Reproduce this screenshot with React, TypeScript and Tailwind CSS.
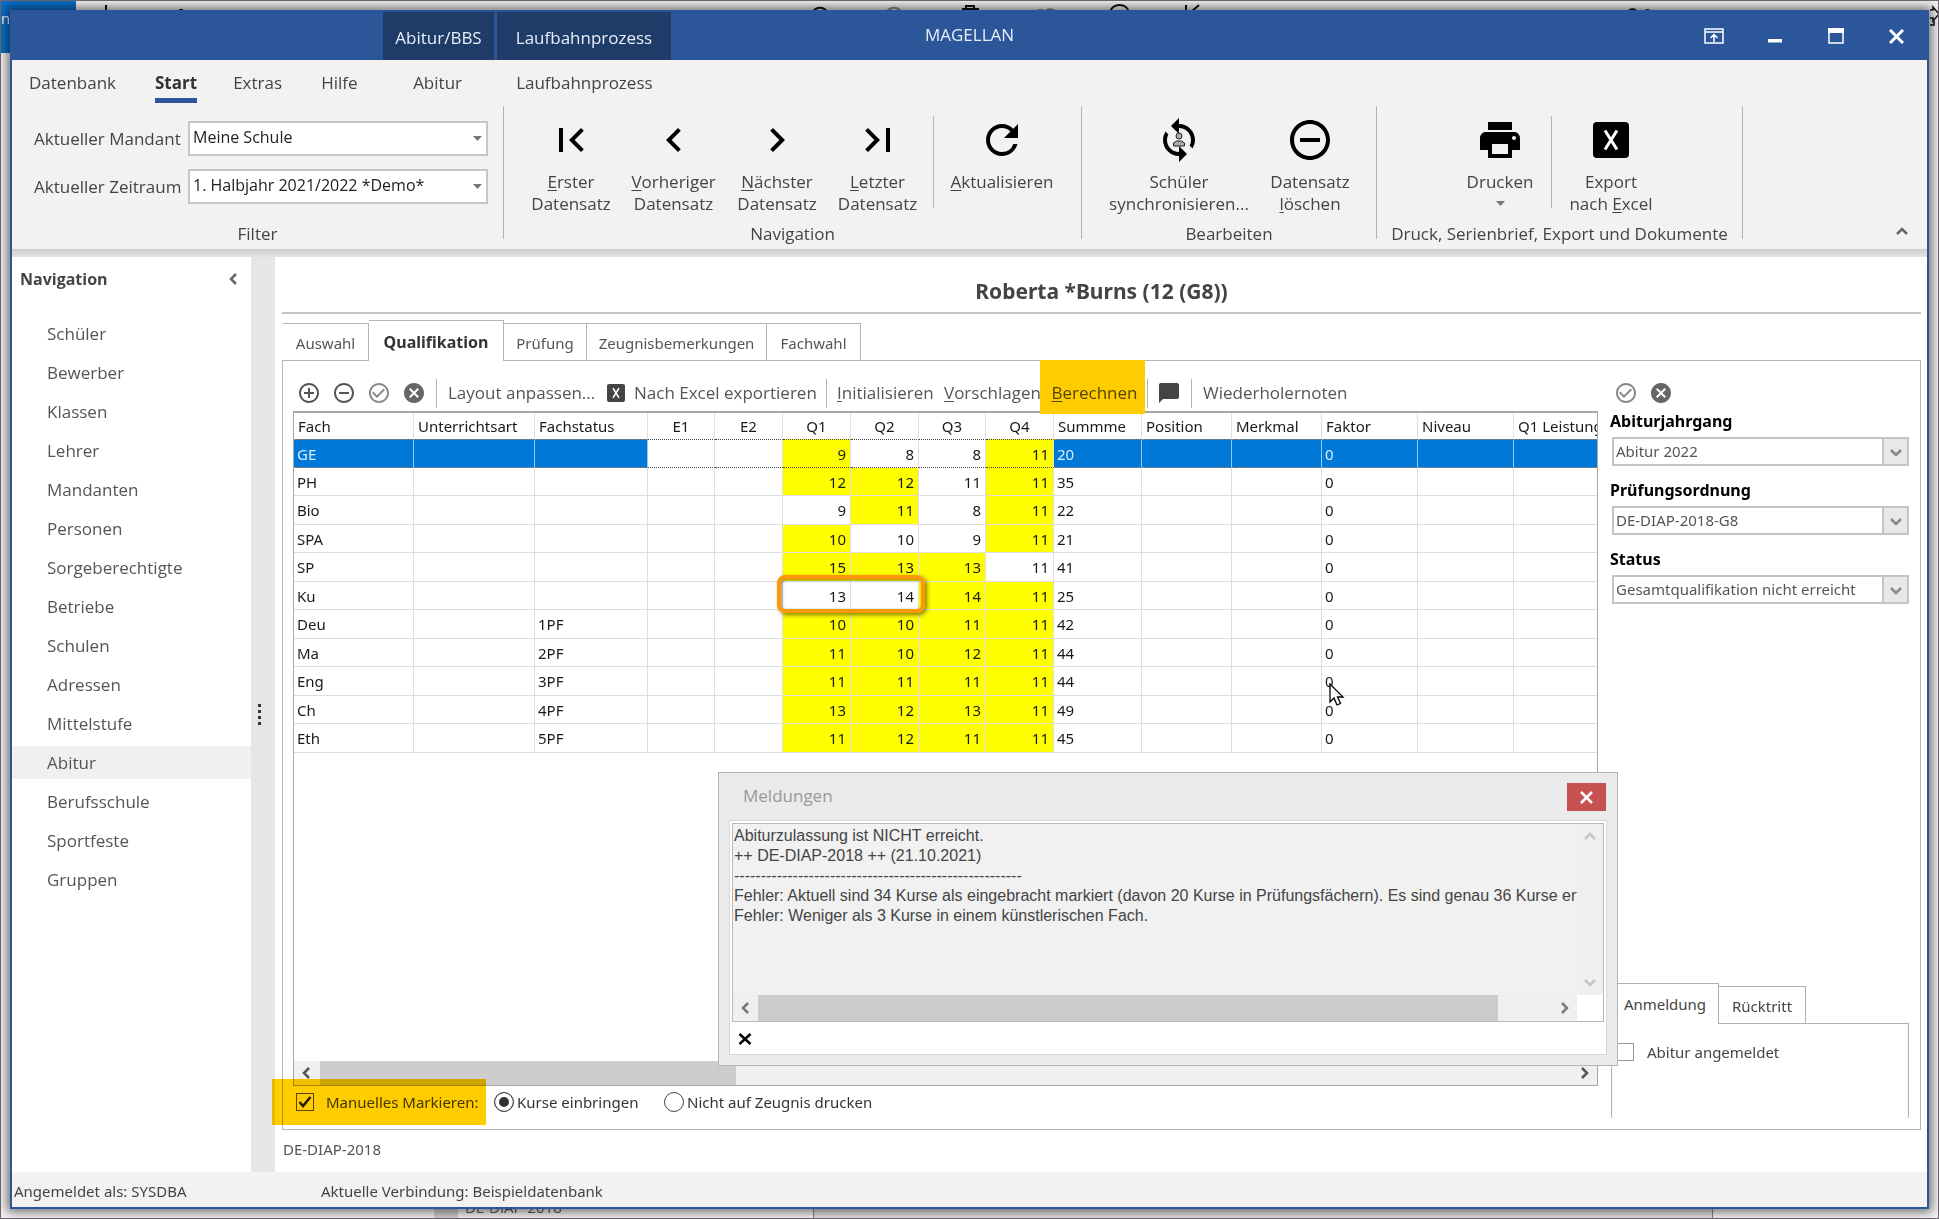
import { ReactNode } from "react";
import clsx from "clsx";
import {
  MdAddCircleOutline,
  MdCancel,
  MdChatBubble,
  MdCheckCircleOutline,
  MdChevronLeft,
  MdChevronRight,
  MdFirstPage,
  MdLastPage,
  MdPrint,
  MdRefresh,
  MdRemoveCircleOutline,
  MdSync,
} from "react-icons/md";

const navItems = [
  "Schüler", "Bewerber", "Klassen", "Lehrer", "Mandanten", "Personen", "Sorgeberechtigte", "Betriebe",
  "Schulen", "Adressen", "Mittelstufe", "Abitur", "Berufsschule", "Sportfeste", "Gruppen",
];

const columns: { name: string; width?: number; center?: boolean }[] = [
  { name: "Fach", width: 120 },
  { name: "Unterrichtsart", width: 121 },
  { name: "Fachstatus", width: 113 },
  { name: "E1", width: 67, center: true },
  { name: "E2", width: 68, center: true },
  { name: "Q1", width: 68, center: true },
  { name: "Q2", width: 68, center: true },
  { name: "Q3", width: 67, center: true },
  { name: "Q4", width: 68, center: true },
  { name: "Summme", width: 88 },
  { name: "Position", width: 90 },
  { name: "Merkmal", width: 90 },
  { name: "Faktor", width: 96 },
  { name: "Niveau", width: 96 },
  { name: "Q1 Leistung" },
];

interface Course {
  fach: string;
  status: string;
  points: number[];
  marked: boolean[];
  sum: number;
}

const course = (fach: string, status: string, points: number[], marks: string, sum: number): Course => ({
  fach,
  status,
  points,
  marked: marks.split("").map((m) => m === "x"),
  sum,
});

const courses: Course[] = [
  course("GE", "", [9, 8, 8, 11], "x--x", 20),
  course("PH", "", [12, 12, 11, 11], "xx-x", 35),
  course("Bio", "", [9, 11, 8, 11], "-x-x", 22),
  course("SPA", "", [10, 10, 9, 11], "x--x", 21),
  course("SP", "", [15, 13, 13, 11], "xxx-", 41),
  course("Ku", "", [13, 14, 14, 11], "--xx", 25),
  course("Deu", "1PF", [10, 10, 11, 11], "xxxx", 42),
  course("Ma", "2PF", [11, 10, 12, 11], "xxxx", 44),
  course("Eng", "3PF", [11, 11, 11, 11], "xxxx", 44),
  course("Ch", "4PF", [13, 12, 13, 11], "xxxx", 49),
  course("Eth", "5PF", [11, 12, 11, 11], "xxxx", 45),
];

function Mnemonic({ text, at = 0 }: { text: string; at?: number }) {
  return (
    <span>
      {text.slice(0, at)}
      <span className="underline underline-offset-2">{text[at]}</span>
      {text.slice(at + 1)}
    </span>
  );
}

type Dir = "left" | "right" | "up" | "down";
const chevrons: Record<Dir, string> = {
  left: "M9 2 4 7l5 5",
  right: "M5 2l5 5-5 5",
  up: "M2 9l5-5 5 5",
  down: "M2 5l5 5 5-5",
};

function Chevron({ dir, className }: { dir: Dir; className?: string }) {
  return (
    <svg viewBox="0 0 14 14" className={clsx("size-3.5 shrink-0", className)} fill="none" stroke="currentColor" strokeWidth="2.5">
      <path d={chevrons[dir]} />
    </svg>
  );
}

function ExcelIcon({ className }: { className?: string }) {
  return (
    <svg viewBox="0 0 36 36" className={className}>
      <rect width="36" height="36" rx="4" fill="currentColor" />
      <path d="M12 8.500 24 27.500M24 8.500 12 27.500" stroke="#fff" strokeWidth="3" />
    </svg>
  );
}

/* Parts of the window that lies behind this one */
function Backdrop() {
  return (
    <div className="absolute inset-0 overflow-hidden border border-[#6f6a70] bg-[#f4f4f4]" aria-hidden="true">
      <div className="absolute left-0 top-0 h-[52px] w-[75px] bg-[#0a6fca] pt-1.5 text-[15px] text-white">nz</div>
      <div className="absolute bottom-0 left-[433px] h-2.5 w-6 bg-[#cfcfcf]" />
      <div className="absolute bottom-px left-[464px] text-[15px] leading-5 text-[#555]">DE-DIAP-2018</div>
      <div className="absolute bottom-0 left-[812px] h-2.5 w-[900px] border-x border-[#888] bg-[#e2e2e2]" />
      <svg className="absolute left-0 top-0" width="1939" height="30" fill="none" stroke="#111" strokeWidth="2">
        <path d="M105 4v8M178 9h4M812 11a8 8 0 0 1 14 0M961 8h17M965 7V5h8v2M1109 11a10 10 0 0 1 19 0M1185 4v8M1190 11l8-7M1627 11a5 5 0 0 1 9 0M1643 11a4 4 0 0 1 7 0" />
        <path d="M886 11a8 8 0 0 1 14 0M1035 11a6 6 0 0 1 9 0a6 6 0 0 1 10 0" stroke="#888" />
        <path d="M1929 9h3V6l6 7-6 7v-3h-3M1929 24h4v-4" strokeWidth="1.500" />
      </svg>
    </div>
  );
}

function TitleBar() {
  return (
    <header className="relative flex h-12 items-stretch bg-[#2b579a] pl-[371px] text-[17px] text-[#e8eef8]">
      <div className="flex w-[111px] items-center justify-center bg-[#1f3c69] pt-1">Abitur/BBS</div>
      <div className="ml-[3px] flex w-[174px] items-center justify-center bg-[#1f3c69] pt-1">Laufbahnprozess</div>
      <h1 className="absolute left-1/2 top-[11px] -translate-x-1/2 leading-6">MAGELLAN</h1>
      <div className="ml-auto flex items-center text-white">
        <button aria-label="Menüband" className="flex w-[61px] justify-center">
          <svg width="20" height="16" viewBox="0 0 20 16" fill="none" stroke="currentColor" strokeWidth="1.500">
            <path d="M1 1h18v14H1zM1 4h18M10 14V7M6.500 10 10 6.500l3.500 3.500" />
          </svg>
        </button>
        <button aria-label="Minimieren" className="flex w-[61px] justify-center">
          <svg width="14" height="16" viewBox="0 0 14 16"><path d="M0 11h14v3.500H0z" fill="currentColor" /></svg>
        </button>
        <button aria-label="Maximieren" className="flex w-[61px] justify-center">
          <svg width="16" height="16" viewBox="0 0 16 16" fill="none" stroke="currentColor" strokeWidth="1.500">
            <path d="M1 1h14v14H1z" /><path d="M0 0h16v5H0z" fill="currentColor" stroke="none" />
          </svg>
        </button>
        <button aria-label="Schließen" className="flex w-[61px] justify-center">
          <svg width="15" height="15" viewBox="0 0 15 15" stroke="currentColor" strokeWidth="3"><path d="M1 1l13 13M14 1 1 14" /></svg>
        </button>
      </div>
    </header>
  );
}

function RibbonButton({ icon, width, children }: { icon: ReactNode; width: string; children: ReactNode }) {
  return (
    <button className={clsx("flex shrink-0 flex-col items-center whitespace-nowrap leading-[22px]", width)}>
      <span className="mb-[7px] flex h-12 items-center justify-center text-black">{icon}</span>
      {children}
    </button>
  );
}

function RibbonGroup({ title, width, children }: { title: string; width: string; children: ReactNode }) {
  return (
    <section className={clsx("flex h-[133px] shrink-0 flex-col border-r border-[#b5b5b5]", width)}>
      <div className="flex flex-1">{children}</div>
      <h2 className="mb-[-6px] text-center leading-[22px]">{title}</h2>
    </section>
  );
}

function RibbonSelect({ id, label, value }: { id: string; label: string; value: string }) {
  return (
    <div className="flex items-center">
      <label htmlFor={id} className="w-[154px]">{label}</label>
      <div className="relative">
        <select id={id} className="h-[35px] w-[300px] appearance-none border-2 border-[#c6c6c6] bg-white pb-1 pl-[3px] text-base text-[#222]">
          <option>{value}</option>
        </select>
        <svg className="pointer-events-none absolute right-1.5 top-[15px]" width="9" height="6"><path d="M0 0h9L4.500 5z" fill="#777" /></svg>
      </div>
    </div>
  );
}

function Ribbon() {
  const big = "size-12";
  return (
    <div className="bg-[#f3f2f1] text-[17px] text-[#444]">
      <nav className="flex h-[46px] pl-[17px] pt-3 leading-[22px]">
        <a href="#" className="w-[126px]">Datenbank</a>
        <a href="#" className="mr-9 h-[31px] border-b-[5px] border-[#2b579a] font-bold text-[#333]">Start</a>
        <a href="#" className="w-[88px]">Extras</a>
        <a href="#" className="w-[92px]">Hilfe</a>
        <a href="#" className="w-[103px]">Abitur</a>
        <a href="#">Laufbahnprozess</a>
      </nav>
      <div className="flex h-[143px]">
        <RibbonGroup title="Filter" width="w-[492px]">
          <div className="flex flex-col gap-[13px] pl-[22px] pt-[15px]">
            <RibbonSelect id="mandant" label="Aktueller Mandant" value="Meine Schule" />
            <RibbonSelect id="zeitraum" label="Aktueller Zeitraum" value="1. Halbjahr 2021/2022 *Demo*" />
          </div>
        </RibbonGroup>
        <RibbonGroup title="Navigation" width="w-[578px]">
          <div className="flex pl-4 pt-2.5">
            <RibbonButton width="w-[102px]" icon={<MdFirstPage className={big} />}>
              <Mnemonic text="Erster" />
              <span>Datensatz</span>
            </RibbonButton>
            <RibbonButton width="w-[103px]" icon={<MdChevronLeft className={big} />}>
              <Mnemonic text="Vorheriger" />
              <span>Datensatz</span>
            </RibbonButton>
            <RibbonButton width="w-[104px]" icon={<MdChevronRight className={big} />}>
              <Mnemonic text="Nächster" />
              <span>Datensatz</span>
            </RibbonButton>
            <RibbonButton width="w-[97px]" icon={<MdLastPage className={big} />}>
              <Mnemonic text="Letzter" />
              <span>Datensatz</span>
            </RibbonButton>
            <div className="mx-[7px] h-[92px] border-l border-[#b5b5b5]" />
            <RibbonButton width="w-[122px]" icon={<MdRefresh className={big} />}>
              <Mnemonic text="Aktualisieren" />
            </RibbonButton>
          </div>
        </RibbonGroup>
        <RibbonGroup title="Bearbeiten" width="w-[295px]">
          <div className="flex pl-6 pt-2.5">
            <RibbonButton
              width="w-[146px]"
              icon={
                <span className="relative">
                  <MdSync className={big} />
                  <svg className="absolute left-[17px] top-4" width="14" height="16" fill="#aaa" stroke="#222">
                    <circle cx="7" cy="4" r="3" />
                    <path d="M1.500 14v-3l3-2h5l3 2v3z" />
                  </svg>
                </span>
              }
            >
              <span>Schüler</span>
              <span>synchronisieren...</span>
            </RibbonButton>
            <RibbonButton width="w-[116px]" icon={<MdRemoveCircleOutline className={big} />}>
              <span>Datensatz</span>
              <Mnemonic text="löschen" />
            </RibbonButton>
          </div>
        </RibbonGroup>
        <RibbonGroup title="Druck, Serienbrief, Export und Dokumente" width="w-[366px]">
          <div className="flex pl-[78px] pt-2.5">
            <RibbonButton width="w-[90px]" icon={<MdPrint className={big} />}>
              <span>Drucken</span>
              <svg className="mt-2" width="9" height="6"><path d="M0 0h9L4.500 5z" fill="#777" /></svg>
            </RibbonButton>
            <div className="mx-1.5 h-[92px] border-l border-[#b5b5b5]" />
            <RibbonButton width="w-[106px]" icon={<ExcelIcon className="size-9" />}>
              <span>Export</span>
              <Mnemonic text="nach Excel" at={5} />
            </RibbonButton>
          </div>
        </RibbonGroup>
        <button aria-label="Menüband einklappen" className="mb-2.5 ml-auto mr-[18px] self-end">
          <Chevron dir="up" className="text-[#666]" />
        </button>
      </div>
      <div className="h-2 bg-linear-to-b from-[#cfcfcf] to-[#e2e2e2]" />
    </div>
  );
}

function Sidebar() {
  return (
    <aside className="w-[239px] shrink-0 bg-white text-[17px] text-[#555]">
      <div className="flex items-center justify-between pb-[26px] pl-2 pr-2.5 pt-2.5 leading-6">
        <h2 className="text-base font-bold leading-6 text-[#444]">Navigation</h2>
        <button aria-label="Navigation einklappen"><Chevron dir="left" className="text-[#666]" /></button>
      </div>
      <ul className="flex flex-col gap-1.5">
        {navItems.map((item) => (
          <li key={item}>
            <a href="#" className={clsx("block h-[33px] pl-[35px] leading-[33px]", item === "Abitur" && "bg-[#f0f0f0]")}>
              {item}
            </a>
          </li>
        ))}
      </ul>
    </aside>
  );
}

function ToolSep({ className }: { className?: string }) {
  return <div className={clsx("h-[29px] border-l border-[#b5b5b5]", className)} />;
}

function Toolbar() {
  return (
    <div className="mt-3.5 flex h-9 shrink-0 items-center whitespace-nowrap pl-1 font-['Open_Sans','Noto_Sans',sans-serif] text-[17px] text-[#555]">
      <div className="flex gap-[11px]">
        <button aria-label="Hinzufügen"><MdAddCircleOutline className="size-6" /></button>
        <button aria-label="Entfernen"><MdRemoveCircleOutline className="size-6" /></button>
        <button aria-label="Übernehmen"><MdCheckCircleOutline className="size-6 text-[#888]" /></button>
        <button aria-label="Verwerfen"><MdCancel className="size-6 text-[#666]" /></button>
      </div>
      <ToolSep className="ml-2.5 mr-[11px]" />
      <button className="w-[159px] text-left">Layout anpassen...</button>
      <button className="flex w-[219px] items-center gap-[9px] text-left">
        <ExcelIcon className="size-[18px] text-[#444]" />
        Nach Excel exportieren
      </button>
      <ToolSep className="mr-2.5" />
      <button className="w-[107px] text-left"><Mnemonic text="Initialisieren" /></button>
      <button className="w-24 text-left"><Mnemonic text="Vorschlagen" /></button>
      <button className="relative z-10 w-[105px] pl-1">
        <Mnemonic text="Berechnen" />
        <span className="pointer-events-none absolute -top-5 left-0 h-[54px] w-[105px] bg-[#ffcc00] mix-blend-multiply" />
      </button>
      <ToolSep className="ml-0.5 mr-[9px]" />
      <button aria-label="Meldungen"><MdChatBubble className="size-6 text-[#444]" /></button>
      <ToolSep className="mx-2.5" />
      <button className="ml-px">Wiederholernoten</button>
    </div>
  );
}

function CourseTable() {
  return (
    <table className="w-full table-fixed border-separate border-spacing-0 text-[15px] leading-5 text-[#1a1a1a]">
      <colgroup>
        {columns.map((c) => <col key={c.name} style={c.width ? { width: c.width } : undefined} />)}
      </colgroup>
      <thead>
        <tr className="h-[26px]">
          {columns.map((c) => (
            <th
              key={c.name}
              className={clsx(
                "overflow-hidden whitespace-nowrap border-r border-[#e0e0e0] p-0 font-normal last:border-r-0",
                c.center ? "text-center" : "pl-1 text-left",
              )}
            >
              {c.name}
            </th>
          ))}
        </tr>
      </thead>
      <tbody>
        {courses.map((row, r) => {
          const selected = r === 0;
          const plain = clsx(
            "border-r p-0 pl-[3px]",
            selected
              ? "border-y border-y-[#c08050] border-r-[#9cc8ee] bg-[#0078d7] text-[#dcebfa] [border-top-style:dotted] [border-bottom-style:dotted]"
              : "border-b border-[#dedede]",
          );
          const grade = clsx(
            "relative border-r p-0 pr-1 text-right",
            selected
              ? "border-y border-y-[#444] border-r-[#dedede] [border-top-style:dotted] [border-bottom-style:dotted]"
              : "border-b border-[#dedede]",
          );
          return (
            <tr key={row.fach} className="h-[28px] odd:h-[29px]">
              <td className={plain}>{row.fach}</td>
              <td className={plain} />
              <td className={clsx(plain, "pl-1")}>{row.status}</td>
              <td className={grade} />
              <td className={grade} />
              {row.points.map((p, i) => (
                <td key={i} className={clsx(grade, row.marked[i] && "bg-[#ffff00]")}>
                  {p}
                  {row.fach === "Ku" && i === 0 && (
                    <span className="pointer-events-none absolute -left-1.5 -top-[7px] z-10 h-[38px] w-[148px] rounded-lg border-4 border-[#ff9800] shadow-[2px_2px_4px_rgba(0,0,0,0.5),inset_1px_1px_3px_rgba(0,0,0,0.5)]" />
                  )}
                </td>
              ))}
              <td className={plain}>{row.sum}</td>
              <td className={plain} />
              <td className={plain} />
              <td className={clsx(plain, "relative")}>
                0
                {row.fach === "Eng" && (
                  <svg className="absolute left-[7px] top-4 z-10" width="16" height="24" viewBox="0 0 16 24">
                    <path d="M1 1v18l4-4 3 7 3.500-1.500-3-6.500H14z" fill="#fff" stroke="#000" strokeWidth="1.300" />
                  </svg>
                )}
              </td>
              <td className={plain} />
              <td className={clsx(plain, "border-r-0")} />
            </tr>
          );
        })}
      </tbody>
    </table>
  );
}

function MarkOptions() {
  return (
    <div className="flex h-8 shrink-0 items-center whitespace-nowrap text-[15px] text-[#333]">
      <label className="relative flex w-[201px] items-center gap-3 pl-[3px] text-[#444]">
        <input type="checkbox" defaultChecked className="size-[18px] appearance-none border border-[#555] bg-white" />
        <svg className="pointer-events-none absolute left-[5px]" width="14" height="14" fill="none" stroke="#222" strokeWidth="2.500">
          <path d="M1.500 7 5 11l7.500-9" />
        </svg>
        Manuelles Markieren:
        <span className="pointer-events-none absolute -left-[21px] -top-3 h-[46px] w-[214px] bg-[#ffcc00] mix-blend-multiply" />
      </label>
      <label className="flex w-[170px] items-center gap-[3px]">
        <input
          type="radio"
          name="mark"
          defaultChecked
          className="size-5 appearance-none rounded-full border border-[#444] bg-[#333] shadow-[inset_0_0_0_4px_white]"
        />
        Kurse einbringen
      </label>
      <label className="flex items-center gap-[3px]">
        <input type="radio" name="mark" className="size-5 appearance-none rounded-full border border-[#444] bg-white" />
        Nicht auf Zeugnis drucken
      </label>
    </div>
  );
}

function SideSelect({ id, label, value }: { id: string; label: string; value: string }) {
  return (
    <div className="mb-3.5">
      <label htmlFor={id} className="mb-1.5 block text-base font-bold leading-5 text-black">{label}</label>
      <div className="relative ml-0.5">
        <select id={id} className="h-[29px] w-full appearance-none border-2 border-[#c4c4c4] bg-white pb-0.5 pl-0.5 text-[15px] leading-5 text-[#555]">
          <option>{value}</option>
        </select>
        <span className="pointer-events-none absolute bottom-0 right-0 top-0 flex w-[27px] items-center justify-center border-2 border-[#c4c4c4] bg-[#e8e8e8]">
          <Chevron dir="down" className="text-[#888]" />
        </span>
      </div>
    </div>
  );
}

function Details() {
  return (
    <div className="flex w-[299px] shrink-0 flex-col">
      <div className="mt-3.5 flex h-9 shrink-0 items-center gap-[11px] pl-1">
        <button aria-label="Übernehmen"><MdCheckCircleOutline className="size-6 text-[#888]" /></button>
        <button aria-label="Verwerfen"><MdCancel className="size-6 text-[#666]" /></button>
      </div>
      <SideSelect id="jahrgang" label="Abiturjahrgang" value="Abitur 2022" />
      <SideSelect id="ordnung" label="Prüfungsordnung" value="DE-DIAP-2018-G8" />
      <SideSelect id="status" label="Status" value="Gesamtqualifikation nicht erreicht" />
      <div className="mb-[11px] ml-px mt-auto text-[15px] text-[#444]">
        <div className="flex items-end">
          <button className="relative z-10 -mb-px h-[41px] w-[108px] border border-b-0 border-[#b0b0b0] bg-white">Anmeldung</button>
          <button className="-ml-px h-[37px] w-[88px] border border-b-0 border-[#b0b0b0] pt-0.5">Rücktritt</button>
        </div>
        <div className="h-[95px] border border-b-0 border-[#b0b0b0] pl-1 pt-[17px]">
          <label className="flex items-center gap-[13px]">
            <input type="checkbox" className="size-[18px] appearance-none border border-[#999] bg-white" />
            Abitur angemeldet
          </label>
        </div>
      </div>
    </div>
  );
}

function MessageDialog() {
  return (
    <div
      role="dialog"
      aria-label="Meldungen"
      className="absolute left-[706px] top-[515px] z-20 flex h-[294px] w-[900px] flex-col border border-[#b4b4b4] bg-[#ebebeb] px-2.5 pb-2.5"
    >
      <div className="flex h-[47px] shrink-0 items-start justify-between pl-3.5 pr-px pt-2.5">
        <h2 className="text-[17px] leading-[26px] text-[#999]">Meldungen</h2>
        <button aria-label="Meldungen schließen" className="flex h-7 w-[39px] items-center justify-center bg-[#c75050] text-white">
          <svg width="13" height="13" viewBox="0 0 13 13" stroke="currentColor" strokeWidth="2.500"><path d="M1 1l11 11M12 1 1 12" /></svg>
        </button>
      </div>
      <div className="flex flex-1 flex-col border border-[#d8d8d8] bg-white p-0.5">
        <div className="flex h-[199px] flex-col border border-[#b8b8b8] bg-[#f1f1f1]">
          <div className="flex min-h-0 flex-1">
            <pre className="min-w-0 flex-1 overflow-hidden pl-px pt-0.5 font-['Liberation_Sans',Arial,sans-serif] text-base leading-5 text-[#444]">
              {"Abiturzulassung ist NICHT erreicht.\n" +
                "++ DE-DIAP-2018 ++ (21.10.2021)\n" +
                "------------------------------------------------------\n" +
                "Fehler: Aktuell sind 34 Kurse als eingebracht markiert (davon 20 Kurse in Prüfungsfächern). Es sind genau 36 Kurse erforderlich.\n" +
                "Fehler: Weniger als 3 Kurse in einem künstlerischen Fach."}
            </pre>
            <div className="flex w-[26px] flex-col items-center justify-between bg-[#efefef] py-1.5 text-[#c4c4c4]">
              <Chevron dir="up" />
              <Chevron dir="down" />
            </div>
          </div>
          <div className="flex h-[26px] shrink-0">
            <div className="flex flex-1 items-center bg-[#efefef] pr-1.5 text-[#777]">
              <div className="flex w-[25px] justify-center"><Chevron dir="left" /></div>
              <div className="mr-auto h-full w-[740px] bg-[#cbcbcb]" />
              <Chevron dir="right" />
            </div>
            <div className="w-[26px] bg-white" />
          </div>
        </div>
        <button aria-label="Löschen" className="ml-1.5 mt-2.5 size-3.5 text-black">
          <svg viewBox="0 0 14 14" stroke="currentColor" strokeWidth="2.500"><path d="M1.500 2l11 10M12.500 2l-11 10" /></svg>
        </button>
      </div>
    </div>
  );
}

const tab = "-mb-px h-[38px] border border-l-0 border-[#b5b5b5] pt-0.5 text-center";

function Content() {
  return (
    <main className="flex min-w-0 flex-1 flex-col bg-white pl-[7px] pr-1.5 font-['Noto_Sans','Open_Sans',sans-serif]">
      <h2 className="h-[57px] shrink-0 border-b-2 border-[#c4c4c4] pt-[22px] text-center text-[21px] font-bold leading-6 text-[#444]">
        Roberta *Burns (12 (G8))
      </h2>
      <div className="flex h-[46px] shrink-0 items-end pl-px text-[15px] text-[#555]">
        <button className={clsx(tab, "w-[86px] border-l")}>Auswahl</button>
        <button className="relative -mb-px h-[41px] w-[135px] border border-b-0 border-l-0 border-[#b5b5b5] bg-white pt-0.5 text-base font-bold text-[#333]">
          Qualifikation
        </button>
        <button className={clsx(tab, "w-[83px]")}>Prüfung</button>
        <button className={clsx(tab, "w-[180px]")}>Zeugnisbemerkungen</button>
        <button className={clsx(tab, "w-[94px]")}>Fachwahl</button>
      </div>
      <div className="flex min-h-0 flex-1 gap-3 border border-[#b5b5b5] pl-2.5 pr-[11px]">
        <div className="flex min-w-0 flex-1 flex-col pb-[11px]">
          <Toolbar />
          <div className="flex min-h-0 flex-1 flex-col overflow-hidden border border-t-2 border-[#a3a7ae]">
            <CourseTable />
            <div className="mt-auto flex h-6 items-center bg-[#f0f0f0] pr-1.5 text-[#555]">
              <div className="flex w-[26px] justify-center"><Chevron dir="left" /></div>
              <div className="mr-auto h-full w-[416px] bg-[#cdcdcd]" />
              <Chevron dir="right" />
            </div>
          </div>
          <MarkOptions />
        </div>
        <Details />
      </div>
      <div className="h-[42px] shrink-0 pl-px pt-[9px] text-[15px] leading-5 text-[#555]">DE-DIAP-2018</div>
    </main>
  );
}

export default function App() {
  return (
    <div className="relative flex min-h-screen flex-col p-2.5 font-['Open_Sans','Noto_Sans',sans-serif]">
      <Backdrop />
      <div className="relative flex flex-1 flex-col border-2 border-[#2b579a] bg-white shadow-[0_0_10px_3px_rgba(0,0,0,0.55)]">
        <TitleBar />
        <Ribbon />
        <div className="relative flex flex-1">
          <Sidebar />
          <div className="flex w-6 shrink-0 items-center bg-[#e6e6e6] pl-[7px]">
            <svg width="4" height="22" fill="#333">
              <path d="M0 0h3v3H0zM0 6h3v3H0zM0 12h3v3H0zM0 18h3v3H0z" />
            </svg>
          </div>
          <Content />
          <MessageDialog />
        </div>
        <footer className="flex h-[35px] shrink-0 items-center bg-[#f3f2f1] pl-0.5 pt-1 font-['Noto_Sans','Open_Sans',sans-serif] text-[15px] text-[#444]">
          <span className="w-[307px]">Angemeldet als: SYSDBA</span>
          <span>Aktuelle Verbindung: Beispieldatenbank</span>
        </footer>
      </div>
    </div>
  );
}
